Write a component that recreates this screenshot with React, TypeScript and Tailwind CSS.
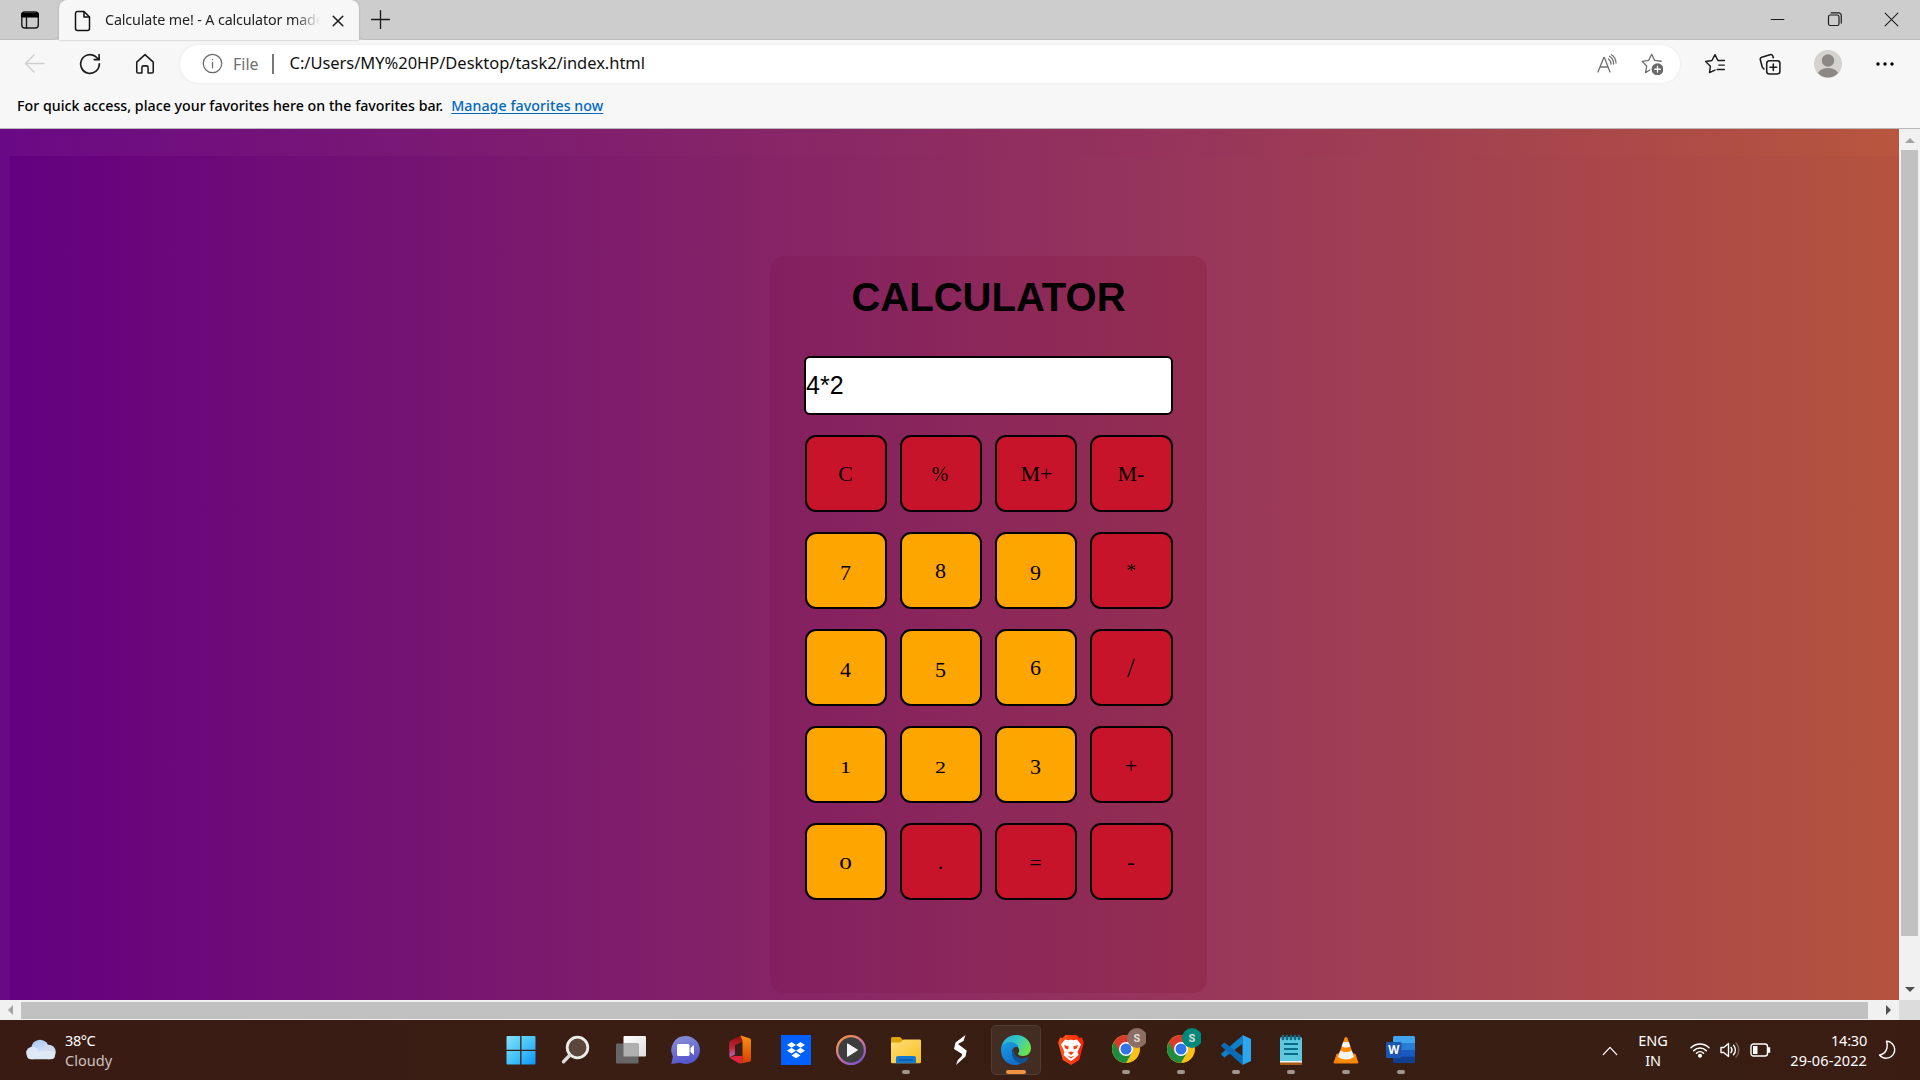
import React from "react";

const ui = "font-['Noto_Sans','Open_Sans',sans-serif]";

type Key = { t: string; num?: boolean; cls?: string };
const keys: Key[] = [
  { t: "C" }, { t: "%", cls: "scale-x-90" }, { t: "M+", cls: "translate-x-px" }, { t: "M-" },
  { t: "7", num: true, cls: "translate-y-[2px]" }, { t: "8", num: true }, { t: "9", num: true, cls: "translate-y-[2px]" }, { t: "*", cls: "scale-90" },
  { t: "4", num: true, cls: "translate-y-[2px]" }, { t: "5", num: true, cls: "translate-y-[2px]" }, { t: "6", num: true }, { t: "/", cls: "scale-x-125 scale-y-125" },
  { t: "1", num: true, cls: "scale-y-80 translate-y-[2px]" }, { t: "2", num: true, cls: "scale-y-80 translate-y-[2px]" }, { t: "3", num: true, cls: "translate-y-[2px]" }, { t: "+", cls: "translate-y-px" },
  { t: "0", num: true, cls: "scale-x-115 scale-y-75 translate-y-[2px]" }, { t: "." }, { t: "=", cls: "translate-y-px" }, { t: "-" },
];

function Line({ children, w = 20, c = "#1b1b1b", sw = 1.4 }: { children: React.ReactNode; w?: number; c?: string; sw?: number }) {
  return (
    <svg width={w} height={w} viewBox="0 0 20 20" fill="none" stroke={c} strokeWidth={sw} strokeLinecap="round" strokeLinejoin="round" className="block shrink-0">
      {children}
    </svg>
  );
}

function Titlebar() {
  return (
    <div className="flex h-10 bg-[#cdcdcd]">
      <div className="flex w-[59px] items-center rounded-br-md border-b border-[#bdbdbd] pl-5">
        <Line>
          <rect x="1.8" y="2" width="16.5" height="16" rx="3" />
          <path d="M2 3.5h16v3.2H2z" fill="#000" stroke="#000" />
          <path d="M6.5 7v11" />
        </Line>
      </div>
      <div className="flex w-[300px] items-center rounded-t-lg bg-[#f7f7f7] pl-[14px] shadow-[0_0_2px_#999]">
        <svg width="20" height="22" viewBox="0 0 20 22" fill="none" stroke="#111" strokeWidth="1.5" strokeLinejoin="round" className="mt-px">
          <path d="M4.5 1.5h6.5l5.500 5.500v11.500a2 2 0 0 1-2 2h-10a2 2 0 0 1-2-2v-15a2 2 0 0 1 2-2z" />
          <path d="M11 1.5V7h5.500" />
        </svg>
        <div className={`${ui} ml-3 w-[215px] overflow-hidden whitespace-nowrap text-[14.3px] leading-5 tracking-[-0.13px] text-[#222] [mask-image:linear-gradient(90deg,#000_88%,transparent)]`}>
          Calculate me! - A calculator made
        </div>
        <div className="ml-[10px] mt-0.5">
          <Line w={16} sw={1.9}><path d="M4 4l12 12M16 4L4 16" /></Line>
        </div>
      </div>
      <div className="flex flex-1 items-center rounded-bl-md border-b border-[#bdbdbd]">
        <div className="ml-[11px]"><Line w={21} sw={1.3}><path d="M10 1.500v17M1.500 10h17" /></Line></div>
        <div className="ml-auto mr-[21px] flex items-center gap-[42px]">
          <Line w={15} sw={1.4}><path d="M1 10h18" strokeLinecap="butt" /></Line>
          <Line w={15} sw={1.6}>
            <rect x="2" y="4" width="14" height="14" rx="2.500" />
            <path d="M5.500 1.200h10a3.500 3.500 0 0 1 3.500 3.500v10" />
          </Line>
          <Line w={15} sw={1.4}><path d="M1.500 1.500l17 17M18.500 1.500l-17 17" /></Line>
        </div>
      </div>
    </div>
  );
}

function Toolbar() {
  return (
    <div className="flex h-[47px] items-center">
      <div className="ml-6"><Line w={21} c="#cfcfcf"><path d="M19 10H1.500M9.500 2L1.500 10l8 8" /></Line></div>
      <div className="ml-[34px]">
        <Line w={22} sw={1.5}>
          <path d="M18.500 9.800A8.500 8.500 0 1 1 14.800 3L18.300 6" /><path d="M18.300 1.500V6h-4.500" />
        </Line>
      </div>
      <div className="ml-[33px]">
        <Line w={22} sw={1.4}>
          <path d="M2.500 8.300L10 1.500l7.500 6.800v8.700a1.200 1.200 0 0 1-1.200 1.200h-3.500v-5a1.500 1.500 0 0 0-1.500-1.500H8.700a1.500 1.500 0 0 0-1.500 1.500v5H3.700a1.200 1.200 0 0 1-1.200-1.200z" />
        </Line>
      </div>
      <div className="ml-6 flex h-[38px] w-[1500px] items-center rounded-full bg-white pl-[22px] shadow-[0_0_3px_#e4e4e4]">
        <Line w={21} c="#6b6b6b" sw={1.2}><circle cx="10" cy="10" r="8.800" /><path d="M10 9v5M10 6v.2" /></Line>
        <span className={`${ui} ml-[10px] w-[26px] whitespace-nowrap text-[16px] text-[#707070]`}>File</span>
        <span className="ml-[13px] h-5 w-[1.500px] bg-[#777]" />
        <span className={`${ui} ml-[16px] whitespace-nowrap text-[16.5px] tracking-[-0.03px] text-[#111]`}>C:/Users/MY%20HP/Desktop/task2/index.html</span>
        <div className="ml-auto mr-[17px] flex items-center gap-[24px]">
          <Line w={20} c="#707070" sw={1.3}>
            <path d="M1 18L6.800 3.500h.6L13 18M3 13h8" /><path d="M11.500 5a6 6 0 0 1 2.500 5M12.500 2.300a8.500 8.500 0 0 1 4 7.700M14.500.8A10 10 0 0 1 19 9" />
          </Line>
          <Line w={22} c="#707070" sw={1.2}>
            <path d="M8 15.500L4.200 17.800l1-6L1 7.600l6-.9L9.700 1.200l2.700 5.500 6 .8" />
            <circle cx="15" cy="14.800" r="4.800" fill="#6a6a6a" stroke="#6a6a6a" /><path d="M15 12.300v5M12.500 14.800h5" stroke="#fff" />
          </Line>
        </div>
      </div>
      <div className="ml-[24px]">
        <Line w={22} sw={1.3}><path d="M10 15.500L5 17.800l.8-5.800L1.500 7.700l5.700-.9L10 1.500l2.600 5.300h6M13.500 11h5M12 15h6.500" /></Line>
      </div>
      <div className="ml-[33px]">
        <Line w={22} sw={1.4}>
          <rect x="7" y="7" width="12" height="12" rx="2.500" /><path d="M13 10v6M10 13h6M4.500 14.500L3 13 1.200 6.200a2 2 0 0 1 1.300-2.400l7.500-2.300a2 2 0 0 1 2.500 1.300l.5 1.500" />
        </Line>
      </div>
      <svg width="28" height="28" viewBox="0 0 28 28" className="ml-[33px]">
        <defs><clipPath id="av"><circle cx="14" cy="14" r="13.500" /></clipPath></defs>
        <circle cx="14" cy="14" r="14" fill="#d5d3d0" />
        <circle cx="14" cy="10.500" r="6.200" fill="#8c8886" />
        <ellipse cx="14" cy="25" rx="10.500" ry="7" fill="#8c8886" clipPath="url(#av)" />
      </svg>
      <svg width="18" height="4" viewBox="0 0 18 4" className="ml-[34px]"><circle cx="2" cy="2" r="1.700" /><circle cx="9" cy="2" r="1.700" /><circle cx="16" cy="2" r="1.700" /></svg>
    </div>
  );
}

function Tri({ dir, c }: { dir: "u" | "d" | "l" | "r"; c: string }) {
  const d = { u: "M0 7L5 2l5 5z", d: "M0 3l5 5 5-5z", l: "M7 0L2 5l5 5z", r: "M3 0l5 5-5 5z" }[dir];
  return <svg width="10" height="10" viewBox="0 0 10 10"><path d={d} fill={c} /></svg>;
}

function Page() {
  return (
    <div className="flex h-[871px]">
      <div className="w-[1899px] overflow-hidden bg-[linear-gradient(90deg,#6a0985,#84226a_36%,#98365a_64%,#b8563e)] pl-[10px] pt-[27px]">
        <div className="flex h-[844px] justify-center bg-[linear-gradient(90deg,#630080,#832168_37%,#98375a_63%,#b5533e)] pl-[68px]">
          <div className="mt-[100px] flex h-[737px] w-[437px] flex-col items-center rounded-[14px] bg-[linear-gradient(90deg,#831f60,#8b275b_45%,#942e50)]">
            <h1 className="mt-[18px] font-['Liberation_Sans',Arial,sans-serif] text-[40px] font-bold leading-[46px] text-black">CALCULATOR</h1>
            <div className="mt-[36px] flex h-[59px] w-[369px] items-center rounded-[6px] border-2 border-black bg-white font-['Liberation_Sans',Arial,sans-serif] text-[25px] text-black">4*2</div>
            <div className="mt-[20px] grid grid-cols-[82px_82px_82px_83px] gap-x-[13px] gap-y-[20px] font-['Liberation_Serif','Times_New_Roman',serif] text-[22px] leading-none text-black">
              {keys.map((k) => (
                <div key={k.t} className={`flex h-[77px] items-center justify-center rounded-[11px] border-2 border-black ${k.num ? "bg-[#ffa500]" : "bg-[#c7142a]"}`}>
                  <span className={`block ${k.cls ?? ""}`}>{k.t}</span>
                </div>
              ))}
            </div>
          </div>
        </div>
      </div>
      <div className="flex w-[21px] flex-col items-center bg-[#f1f1f1]">
        <div className="flex h-[21px] items-center pt-0.5"><Tri dir="u" c="#a3a3a3" /></div>
        <div className="h-[786px] w-[17px] bg-[#c1c1c1]" />
        <div className="mt-auto flex h-[21px] items-center pb-0.5"><Tri dir="d" c="#505050" /></div>
      </div>
    </div>
  );
}

function HScroll() {
  return (
    <div className="flex h-5 bg-[#f1f1f1]">
      <div className="flex w-[21px] items-center justify-center"><Tri dir="l" c="#a3a3a3" /></div>
      <div className="mt-0.5 h-[17px] w-[1847px] bg-[#c1c1c1]" />
      <div className="flex w-[31px] items-center justify-end pr-[6px]"><Tri dir="r" c="#505050" /></div>
      <div className="flex-1 bg-[#dcdcdc]" />
    </div>
  );
}

function Chrome({ badge, id }: { badge: string; id: string }) {
  return (
    <svg width="36" height="36" viewBox="0 0 36 36" aria-label={id}>
      <circle cx="16" cy="21" r="14" fill="#fbc116" />
      <path d="M16 21L3.900 14A14 14 0 0 0 16 35l6-10.500z" fill="#1e8e3e" />
      <path d="M16 21l-6 3.500L3.900 14a14 14 0 0 1 24.200 0H16z" fill="#d93a2b" />
      <circle cx="16" cy="21" r="7" fill="#fff" /><circle cx="16" cy="21" r="5.500" fill="#2f74e8" />
      <circle cx="27" cy="10" r="10" fill={badge} />
      <text x="27" y="14" textAnchor="middle" fontSize="11" fontWeight="700" fontFamily="Roboto, sans-serif" fill="#e0dcd8">S</text>
    </svg>
  );
}

const S = (p: { children: React.ReactNode }) => <svg width="32" height="32" viewBox="0 0 32 32">{p.children}</svg>;

const apps: { n: string; run?: boolean; active?: boolean; el: React.ReactNode }[] = [
  { n: "start", el: <S>
    <defs><linearGradient id="wn" x1="0" y1="0" x2="1" y2="1"><stop stopColor="#85e1fc" /><stop offset=".5" stopColor="#45c4f8" /><stop offset="1" stopColor="#1093f8" /></linearGradient></defs>
    <path d="M1.500 3a1 1 0 0 1 1-1h12.700v13.700H1.500zM16.500 2h13a1 1 0 0 1 1 1v12.700h-14zM1.500 17h13.700v13.500h-12.700a1 1 0 0 1-1-1zM16.500 17h14v12.500a1 1 0 0 1-1 1h-13z" fill="url(#wn)" /></S> },
  { n: "search", el: <S>
    <circle cx="17.500" cy="13.500" r="10.300" fill="#5b463c" stroke="#ececec" strokeWidth="2.800" />
    <path d="M9.500 21.500L3.500 27.700" stroke="#dcdcdc" strokeWidth="3.400" strokeLinecap="round" /></S> },
  { n: "tasks", el: <S>
    <defs><linearGradient id="tv" x1="0" y1="0" x2="1" y2="1"><stop stopColor="#fff" /><stop offset="1" stopColor="#dedede" /></linearGradient></defs>
    <rect x="8.500" y="2" width="22.500" height="20.500" rx="1" fill="url(#tv)" /><rect x="1" y="9.500" width="22.500" height="20" rx="1" fill="#666" />
    <rect x="8.500" y="9.500" width="15" height="13" fill="#b0b0b0" /></S> },
  { n: "chat", el: <S>
    <defs><linearGradient id="ch" x1="0" y1="0" x2=".3" y2="1"><stop stopColor="#8d93d8" /><stop offset="1" stopColor="#5555cc" /></linearGradient></defs>
    <path d="M16 2a14 14 0 1 1-6 26.700L1.300 30l1.600-7.500A14 14 0 0 1 16 2z" fill="url(#ch)" />
    <rect x="7" y="10" width="12.500" height="12" rx="1.500" fill="#fff" /><path d="M20.500 14l3.500-3v10l-3.500-3z" fill="#fff" /></S> },
  { n: "office", el: <S>
    <defs><linearGradient id="of" x1="0" y1="0" x2="0" y2="1"><stop stopColor="#8e0e10" /><stop offset=".55" stopColor="#c02638" /><stop offset=".85" stopColor="#b4589c" /><stop offset="1" stopColor="#c0507c" /></linearGradient>
      <linearGradient id="og" x1="0" y1="0" x2="0" y2="1"><stop stopColor="#f79412" /><stop offset="1" stopColor="#d83b01" /></linearGradient></defs>
    <path d="M4 8.500a3 3 0 0 1 1.500-2L15 2l3-.5v6L10 11v9.500L4.500 23.500z" fill="url(#of)" />
    <path d="M4.500 23.700l5-1.700h8v6.500L15.500 29.300a3 3 0 0 1-2.200-.3z" fill="#e0243f" />
    <path d="M15.500 1.600l9 2.600a2 2 0 0 1 1.500 2v19.500a2 2 0 0 1-1.500 2L15.500 29.500l2-2V6.500z" fill="url(#og)" /></S> },
  { n: "dropbox", el: <S>
    <rect x="1" y="1" width="30" height="30" fill="#0061ff" />
    <path d="M11.500 8l4.500 2.900-4.500 2.900L7 10.900zM20.500 8l4.500 2.900-4.500 2.900-4.500-2.900zM11.500 13.800l4.500 2.900-4.500 2.900L7 16.700zM20.500 13.800l4.500 2.900-4.500 2.900-4.500-2.900zM16 18.500l4.500 2.900L16 24.300l-4.500-2.900z" fill="#fff" /></S> },
  { n: "media", el: <S>
    <defs><linearGradient id="mp" x1="0" y1="0" x2=".7" y2="1"><stop stopColor="#ff9a2e" /><stop offset=".5" stopColor="#d47b9a" /><stop offset="1" stopColor="#8353c8" /></linearGradient></defs>
    <circle cx="16" cy="16" r="13.900" fill="#3d3d3d" stroke="url(#mp)" strokeWidth="2.300" /><path d="M12.500 9.800v12.600L22.500 16z" fill="#f4f4f4" stroke="#f4f4f4" strokeLinejoin="round" /></S> },
  { n: "files", run: true, el: <S>
    <defs><linearGradient id="fo" x1="0" y1="0" x2="1" y2="1"><stop stopColor="#ffe07a" /><stop offset="1" stopColor="#f8bd20" /></linearGradient></defs>
    <path d="M1 4.500A1.500 1.500 0 0 1 2.500 3H10l3 3v5H1z" fill="#e0a30a" /><path d="M1 8.500h9.500l3-3h16.200A1.300 1.300 0 0 1 31 6.800V28a1.300 1.300 0 0 1-1.300 1.300H2.300A1.300 1.300 0 0 1 1 28z" fill="url(#fo)" />
    <path d="M6 29.300V24a2 2 0 0 1 2-2h16a2 2 0 0 1 2 2v5.300z" fill="#127ad0" /><path d="M9 26h14" stroke="#0b4f93" strokeWidth="1.200" /></S> },
  { n: "s", el: <S>
    <path d="M20.500 1L10.500 8.500 9 15l8.500 5.300 4-3.800-8.500-6.500L18.500 7zM11 31l9.500-8.500 1.300-6.300-4.500 2.300-.5 3.500-4 4z" fill="#fff" /></S> },
  { n: "edge", run: true, active: true, el: <S>
    <defs><linearGradient id="e1" x1="0" y1="0" x2="1" y2=".5"><stop stopColor="#2aa9e0" /><stop offset=".55" stopColor="#35c7c4" /><stop offset="1" stopColor="#6ae24e" /></linearGradient>
      <linearGradient id="e2" x1="0" y1="0" x2=".6" y2="1"><stop stopColor="#1aa0e4" /><stop offset="1" stopColor="#0f6cc8" /></linearGradient></defs>
    <path d="M1.200 14C2.500 6 8.500 1 16 1c9 0 15 6.500 15 13 0 5-3.500 8-8 8-3.500 0-5.500-1.300-5-2.500 1.500-1.500 1.500-3.500.5-5.500-2-4-12-6-17.300 0z" fill="url(#e1)" />
    <path d="M1 16c0-5 4.500-8 9-8 4.500 0 8 2.500 8.500 5.500-4-1.500-7 1.500-6.500 5.500.5 5.500 5.500 9.500 11 9-2.500 2-5 3-8 3C7 31 1 24.500 1 16z" fill="url(#e2)" />
    <path d="M13.500 15c-3 4-1.500 14 9.500 14.300 3-1.300 5.500-4 6-6-.3-.6-1-.3-1.500 0-6 3-14 0-14-8.300z" fill="#12508f" /></S> },
  { n: "brave", el: <S>
    <defs><linearGradient id="br"><stop stopColor="#ff5a1a" /><stop offset="1" stopColor="#fb1f08" /></linearGradient></defs>
    <path d="M10.500 1h11l3 3 2.500-.5 1.800 5L28.200 11l-4 15L16 31l-8.200-5-4-15-.6-2.500L5 3.500 7.500 4z" fill="url(#br)" />
    <path d="M10 5.500l3.500.7L16 5.500l2.500.7 3.500-.7 4 5-3.500 7.500 1 3-4.500 4-3 2-3-2-4.500-4 1-3L6 10.500z" fill="#fff" />
    <path d="M9 11l4.800 1.500-.8 3-2.700-1zM23 11l-4.800 1.500.8 3 2.700-1zM13 18.500l3-1 3 1-3 2.500zM12 21.500l4 1.500 4-1.500-4 3z" fill="#fb3a10" /></S> },
  { n: "chrome1", run: true, el: <Chrome id="Chrome" badge="#8d6e63" /> },
  { n: "chrome2", run: true, el: <Chrome id="Chrome 2" badge="#00897b" /> },
  { n: "code", run: true, el: <S>
    <path d="M22.500 1.500v8.300L4.500 23.500 1.500 21v-1.500z" fill="#0f80cc" />
    <path d="M1.500 10.800l3-2.400L22.500 22v9L1.500 12.500z" fill="#0a6cb4" /><path d="M22.500 1L31 5v22l-8.500 4z" fill="#2ba6f0" /></S> },
  { n: "notes", run: true, el: <S>
    <path d="M5 27h22v4H5z" fill="#a65a16" /><path d="M5 25h22v3.500H5z" fill="#f4f4f4" /><path d="M5 4.500A1.500 1.500 0 0 1 6.500 3h19A1.500 1.500 0 0 1 27 4.500V27H5z" fill="#5cc8e0" />
    <path d="M9 10h14M9 15h14M9 20h14" stroke="#0b6b84" strokeWidth="1.900" /><path d="M8 2v3M12 2v3M16 2v3M20 2v3M24 2v3" stroke="#136a80" strokeWidth="2.600" strokeLinecap="round" /></S> },
  { n: "vlc", run: true, el: <S>
    <path d="M7 20h18l3 9H4z" fill="#ff8a00" stroke="#f57f00" strokeLinejoin="round" /><path d="M14.500 4q1.500-2 3 0L24 23q-8 5-16 0z" fill="#ff8800" />
    <path d="M13.200 8h5.600l1.600 4.500q-4.400 2.300-8.800 0z" fill="#f7f7f7" /><path d="M10.200 16.500q5.800 3 11.600 0L24 23q-8 5-16 0z" fill="#f4f4f4" /></S> },
  { n: "word", run: true, el: <S>
    <path d="M8 3.500A1.500 1.500 0 0 1 9.500 2h19A1.500 1.500 0 0 1 30 3.500V9H8z" fill="#41a5ee" /><path d="M8 9h22v7H8z" fill="#2b7cd3" /><path d="M8 16h22v7H8z" fill="#185abd" /><path d="M8 22.500h22v5a1.500 1.500 0 0 1-1.500 1.500h-19A1.500 1.500 0 0 1 8 27.500z" fill="#103f91" />
    <rect x="1" y="8" width="15.500" height="16" rx="1.300" fill="#1d55b5" />
    <text x="8.700" y="20.300" textAnchor="middle" fontFamily="Open Sans, sans-serif" fontSize="11.500" fontWeight="700" fill="#fff">W</text></S> },
];

function Taskbar() {
  return (
    <div className={`flex h-[60px] bg-[linear-gradient(90deg,#3a1b14,#391c13_20%,#3a1e13_28%,#381d13_60%,#381f13_80%,#3a1c13)] ${ui} text-white`}>
      <div className="flex w-[493px] items-center pl-[25px]">
        <svg width="32" height="22" viewBox="0 0 32 22">
          <defs><linearGradient id="cl" x1="0" y1="0" x2=".4" y2="1"><stop stopColor="#a9c8f5" /><stop offset="1" stopColor="#d4e4fb" /></linearGradient></defs>
          <circle cx="15" cy="9.500" r="8.800" fill="url(#cl)" /><circle cx="23.500" cy="13" r="7.300" fill="#cfdced" /><circle cx="7.500" cy="14" r="6.300" fill="#dce6f6" />
          <rect x="2" y="12" width="28" height="8.300" rx="4.100" fill="#dfe8f5" />
        </svg>
        <div className="ml-[8px] text-[14.500px] leading-5 tracking-[0.02px]"><div className="tracking-[-0.4px]">38°C</div><div className="text-[#cbc2bf]">Cloudy</div></div>
      </div>
      <div className="flex">
        {apps.map((a) => (
          <div key={a.n} className="flex w-[55px] flex-col items-center pt-[5px]">
            <div className={`relative flex h-[50px] w-[50px] items-center justify-center rounded-[5px] ${a.active ? "border border-[#513c32] bg-[#432c22]" : ""}`}>
              <div className={a.n.startsWith("chrome") ? "relative -top-[4px] left-[2px]" : ""}>{a.el}</div>
              {a.run && <span className={`absolute h-1 rounded-full ${a.active ? "bottom-0 w-5 bg-[#f29344]" : "bottom-px w-2 bg-[#a2958f]"}`} />}
            </div>
          </div>
        ))}
      </div>
      <div className="flex flex-1 items-center">
        <div className="ml-[173px] mt-0.5"><Line w={18} c="#fff" sw={1.400}><path d="M2.500 14L10 6l7.500 8" /></Line></div>
        <div className="ml-[9px] w-[50px] text-center text-[14.500px] leading-5 tracking-[-0.1px]">ENG<br />IN</div>
        <svg width="20" height="18" viewBox="0 0 20 18" fill="none" stroke="#fff" strokeWidth="1.500" strokeLinecap="round" className="ml-[12px]">
          <path d="M1 6.800a12.500 12.500 0 0 1 18 0M3.800 9.600a8.700 8.700 0 0 1 12.400 0M6.500 12.200a5 5 0 0 1 7 0" /><circle cx="10" cy="14.800" r="1.300" fill="#fff" />
        </svg>
        <svg width="20" height="18" viewBox="0 0 20 18" fill="none" stroke="#fff" strokeWidth="1.400" strokeLinecap="round" strokeLinejoin="round" className="ml-[10px]">
          <path d="M1 6.500h2.700L8.500 2.500v13l-4.800-4H1zM11 6.500a4 4 0 0 1 0 5M13.500 4.200a7 7 0 0 1 0 9.600" /><path d="M16 2a10 10 0 0 1 0 14" stroke="#7c655b" />
        </svg>
        <svg width="21" height="14" viewBox="0 0 21 14" fill="none" stroke="#fff" strokeWidth="1.400" className="ml-[10px]">
          <rect x="1" y="1" width="16.500" height="12" rx="2.500" /><rect x="3" y="3" width="4.500" height="8" fill="#fff" stroke="none" /><path d="M18 5h1.500v4H18z" fill="#fff" />
        </svg>
        <div className="ml-[8px] w-[88px] whitespace-nowrap text-right text-[14.500px] leading-5 tracking-[0.1px]"><div className="tracking-[-0.2px]">14:30</div>29-06-2022</div>
        <svg width="19" height="20" viewBox="0 0 19 20" fill="none" stroke="#fff" strokeWidth="1.400" strokeLinejoin="round" className="ml-[11px]">
          <path d="M8.500 1.200a8.500 8.500 0 1 1-7 13.800C7 14.500 10.800 8.500 8.500 1.200z" />
        </svg>
      </div>
    </div>
  );
}

export default function App() {
  return (
    <div className="flex h-[1080px] w-[1920px] flex-col overflow-hidden bg-[#f7f7f7]">
      <Titlebar />
      <div className="h-[89px] border-b border-[#b9b9b9]">
        <Toolbar />
        <div className={`${ui} flex h-[37px] items-center pl-[17px] text-[14.200px] font-medium tracking-[0.02px] text-black`}>
          <span className="whitespace-nowrap">For quick access, place your favorites here on the favorites bar.</span>
          <span className="ml-2 whitespace-nowrap tracking-[0.06px] text-[#0067c0] underline underline-offset-2">Manage favorites now</span>
        </div>
      </div>
      <Page />
      <HScroll />
      <Taskbar />
    </div>
  );
}
